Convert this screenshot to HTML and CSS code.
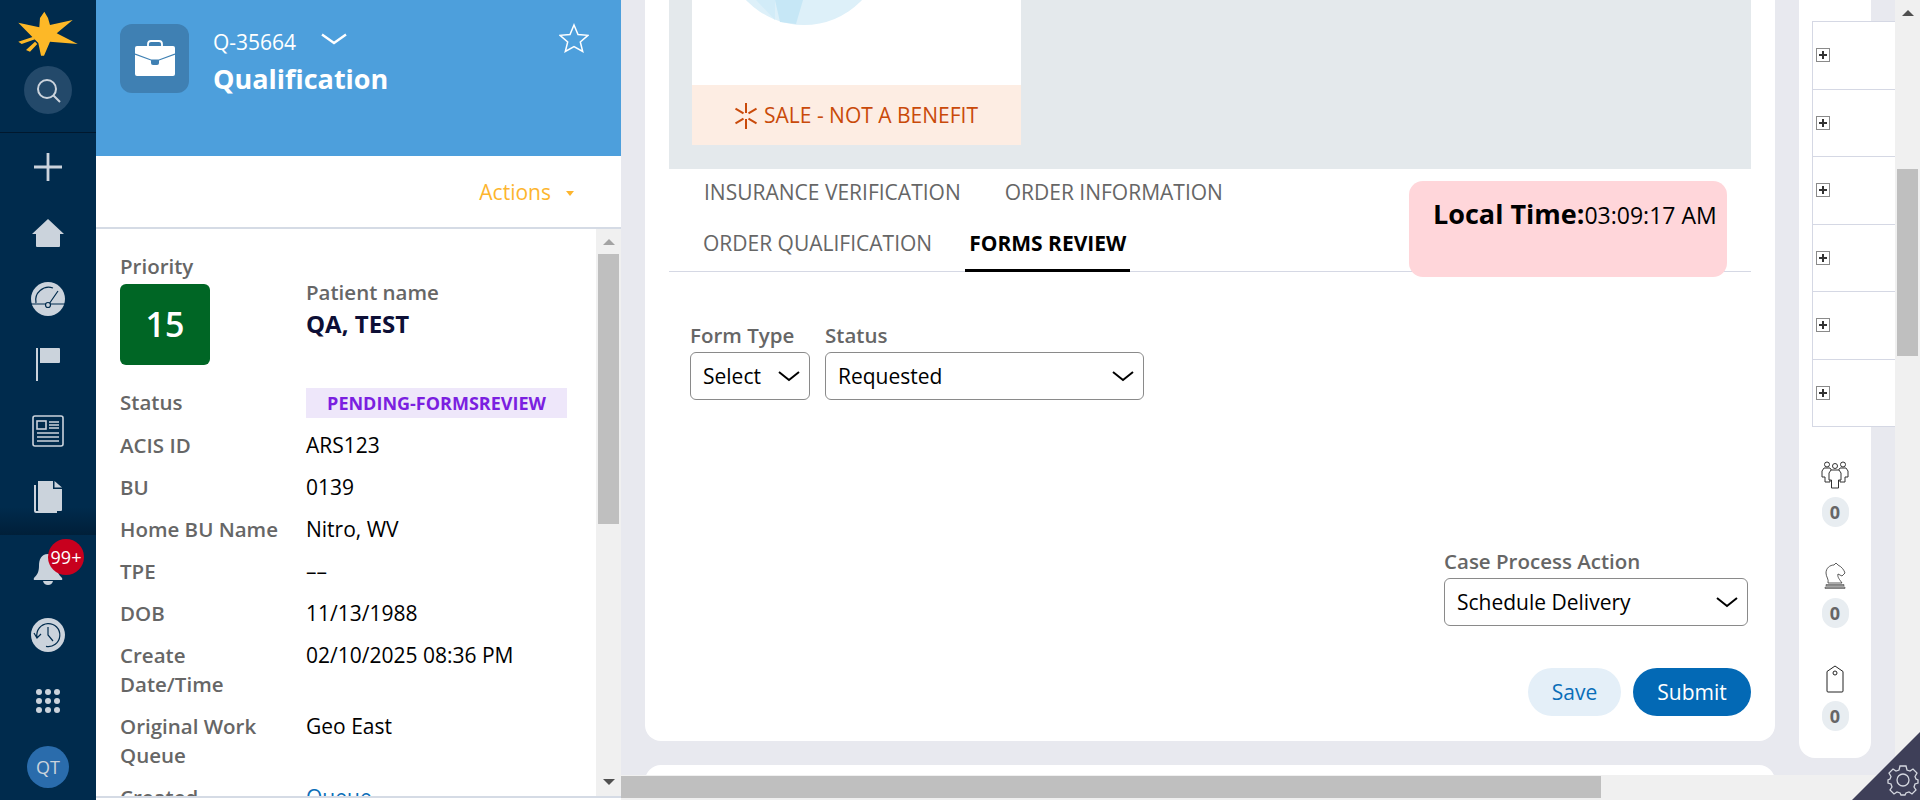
FILE: index.html
```html
<!DOCTYPE html>
<html lang="en">
<head>
  <meta charset="UTF-8" />
  <title>Qualification Q-35664</title>
  <link rel="stylesheet" href="styles.css">
</head>
<body>
  <div class="app">

    <nav class="nav">
      <div class="nav-top">
        <svg class="logo" width="64" height="48" viewBox="0 0 64 48">
          <path fill="#FDB827" d="M28.300 1.700 L32 8 L34 15 L56.700 10 L40.700 23.300 L61.700 34 L34 31.700 L28 45.700 L25 45.700 L22.300 33 L2.300 12.700 L23.300 17.300 L24 8 Z"/>
          <path fill="#FDB827" d="M2.300 31.700 L17.300 26.700 L19 29.300 L5.700 34 Z M10 40 L19 31.700 L21.300 34 L14 41.700 Z"/>
        </svg>
        <div class="search-btn">
          <svg width="28" height="28" viewBox="0 0 28 28" fill="none" stroke="#CBD3DC" stroke-width="2">
            <circle cx="13" cy="13" r="9"/><path d="M19.500 19.500 L26 26"/>
          </svg>
        </div>
      </div>
      <div class="nav-list">
        <div class="nav-item">
          <svg width="28" height="28" viewBox="0 0 28 28" fill="#CBD3DC"><path d="M12.600 0h2.800v12.600H28v2.800H15.400V28h-2.800V15.400H0v-2.800h12.600z"/></svg>
        </div>
        <div class="nav-item">
          <svg width="34" height="30" viewBox="0 0 34 30" fill="#CBD3DC"><path d="M17 1 L33 16 L29 16 L29 28 Q29 29 28 29 L6 29 Q5 29 5 28 L5 16 L1 16 Z"/></svg>
        </div>
        <div class="nav-item">
          <svg width="34" height="34" viewBox="0 0 34 34">
            <circle cx="17" cy="17" r="17" fill="#CBD3DC"/>
            <path d="M5 21 A13 13 0 0 1 22 6 M0 22 H34 M18 22 L27 9" fill="none" stroke="#002B4D" stroke-width="1.200"/>
            <circle cx="17" cy="23" r="2.500" fill="#CBD3DC" stroke="#002B4D" stroke-width="1.200"/>
          </svg>
        </div>
        <div class="nav-item">
          <svg width="26" height="34" viewBox="0 0 26 34" fill="#CBD3DC"><path d="M1 0h2v33H1z"/><path d="M5 0h19q1 0 1 1v13q0 1-1 1H5z"/></svg>
        </div>
        <div class="nav-item">
          <svg width="32" height="32" viewBox="0 0 32 32" fill="none" stroke="#CBD3DC" stroke-width="1.600">
            <rect x="1" y="1" width="30" height="30" rx="2"/><rect x="5" y="6" width="9" height="8"/>
            <path d="M17 7h10M17 10h10M17 13h10M5 18h22M5 22h22M5 26h22"/>
          </svg>
        </div>
        <div class="nav-item">
          <svg width="30" height="34" viewBox="0 0 30 34" fill="#CBD3DC"><path d="M3 5v26h21v2H3q-2 0-2-2V5z"/><path d="M5 1h15v8h9v21q0 1-1 1H6q-1 0-1-1z"/><path d="M21.500 1 L29 7.500 H21.500z"/></svg>
        </div>
      </div>
      <div class="nav-bottom">
        <div class="nav-item">
          <svg width="30" height="32" viewBox="0 0 30 32" fill="#CBD3DC"><path d="M15 1 C8 1 6 7 6 13 C6 19 4 22 1 25 Q0 27 2 27 H28 Q30 27 29 25 C26 22 24 19 24 13 C24 7 22 1 15 1z"/><path d="M10 28h10q-1 4-5 4t-5-4z"/></svg>
          <span class="badge">99+</span>
        </div>
        <div class="nav-item">
          <svg width="34" height="34" viewBox="0 0 34 34">
            <circle cx="17" cy="17" r="17" fill="#CBD3DC"/>
            <path d="M6 19 A11.500 11.500 0 1 1 15 28.300 M3 15 L6 20 L10 16 M17 9 V17 L22 23" fill="none" stroke="#002B4D" stroke-width="1.200"/>
          </svg>
        </div>
        <div class="nav-item">
          <div class="dots"><i></i><i></i><i></i><i></i><i></i><i></i><i></i><i></i><i></i></div>
        </div>
        <div class="nav-item"><span class="avatar">QT</span></div>
      </div>
    </nav>

    <aside class="case-panel">
      <header class="case-head">
        <div class="case-icon">
          <svg width="40" height="37" viewBox="0 0 40 37">
            <path d="M13 7V4q0-3 3-3h8q3 0 3 3v3" fill="none" stroke="#fff" stroke-width="1.800"/>
            <rect y="6" width="40" height="30" rx="2" fill="#fff"/>
            <path d="M0 14 L16 20 H24 L40 14" fill="none" stroke="#3F80B3" stroke-width="1.200"/>
            <path d="M16 20h8v3q0 2-2 2h-4q-2 0-2-2z" fill="#3F80B3"/>
          </svg>
        </div>
        <div class="case-title">
          <div class="case-id">
            Q-35664
            <svg class="case-chev" width="26" height="12" viewBox="0 0 26 12" fill="none" stroke="#fff" stroke-width="2.400"><path d="M1 1.500 L13 10 L25 1.500"/></svg>
          </div>
          <h1>Qualification</h1>
        </div>
        <svg class="star" width="30" height="30" viewBox="0 0 30 30" fill="none" stroke="#fff" stroke-width="1.500"><path d="M15 2 L19 11.500 L29 12.300 L21.300 19 L23.700 28.500 L15 23.500 L6.300 28.500 L8.700 19 L1 12.300 L11 11.500 Z"/></svg>
      </header>
      <div class="actions-bar">
        <span>Actions</span><i class="caret"></i>
      </div>
      <div class="case-body">
        <div class="case-info">
          <div class="summary">
            <div class="priority">
              <div class="label">Priority</div>
              <div class="priority-box">15</div>
            </div>
            <div class="patient">
              <div class="label">Patient name</div>
              <div class="patient-name">QA, TEST</div>
            </div>
          </div>
          <div class="info-row status-row"><div class="label">Status</div><div class="chip">PENDING-FORMSREVIEW</div></div>
          <div class="info-row"><div class="label">ACIS ID</div><div>ARS123</div></div>
          <div class="info-row"><div class="label">BU</div><div>0139</div></div>
          <div class="info-row"><div class="label">Home BU Name</div><div>Nitro, WV</div></div>
          <div class="info-row"><div class="label">TPE</div><div>––</div></div>
          <div class="info-row"><div class="label">DOB</div><div>11/13/1988</div></div>
          <div class="info-row"><div class="label">Create<br>Date/Time</div><div>02/10/2025 08:36 PM</div></div>
          <div class="info-row"><div class="label">Original Work<br>Queue</div><div>Geo East</div></div>
          <div class="info-row"><div class="label">Created</div><div class="link">Queue</div></div>
        </div>
        <div class="vscroll panel-scroll">
          <i class="arrow-up"></i>
          <div class="thumb"></div>
          <i class="arrow-down"></i>
        </div>
      </div>
    </aside>

    <div class="workspace">
      <div class="work-area">
        <main class="main-col">
          <section class="card">
            <div class="banner">
              <div class="benefit">
                <div class="benefit-img">
                  <svg width="329" height="85" viewBox="0 0 329 85">
                    <circle cx="112" cy="-55" r="80" fill="#DDF0F9"/>
                    <path d="M83 0 L88 22 L104 24 L111 0 Z" fill="#C6E7F6"/>
                    <path d="M64 0 L83 20 L83 0 Z" fill="#D2ECF8"/>
                  </svg>
                </div>
                <div class="benefit-tag">
                  <svg width="22" height="26" viewBox="0 0 22 26" fill="#C94A0A"><path d="M10 0h2v10h-2zM10 16h2v10h-2zM0 6.500l1-1.700 8 4.700-1 1.700zM13 16.500l1-1.700 8 4.700-1 1.700zM0 19.500l8-4.700 1 1.700-8 4.700zM13 9.500l8-4.700 1 1.700-8 4.700z"/></svg>
                  SALE - NOT A BENEFIT
                </div>
              </div>
            </div>

            <div class="tabs">
              <div class="tab-row first">
                <span class="tab">INSURANCE VERIFICATION</span>
                <span class="tab">ORDER INFORMATION</span>
              </div>
              <div class="tab-row second">
                <span class="tab">ORDER QUALIFICATION</span>
                <span class="tab active">FORMS REVIEW</span>
              </div>
              <div class="local-time"><b>Local Time:</b>03:09:17 AM</div>
            </div>

            <div class="filters">
              <div class="field">
                <label class="label">Form Type</label>
                <div class="select small">Select
                  <svg class="chev" width="22" height="11" viewBox="0 0 22 11" fill="none" stroke="#000" stroke-width="2"><path d="M1 1 L11 9 L21 1"/></svg>
                </div>
              </div>
              <div class="field">
                <label class="label">Status</label>
                <div class="select status">Requested
                  <svg class="chev" width="22" height="11" viewBox="0 0 22 11" fill="none" stroke="#000" stroke-width="2"><path d="M1 1 L11 9 L21 1"/></svg>
                </div>
              </div>
            </div>

            <div class="process">
              <div class="field">
                <label class="label">Case Process Action</label>
                <div class="select action">Schedule Delivery
                  <svg class="chev" width="22" height="11" viewBox="0 0 22 11" fill="none" stroke="#000" stroke-width="2"><path d="M1 1 L11 9 L21 1"/></svg>
                </div>
              </div>
            </div>

            <div class="buttons">
              <button class="btn-save">Save</button>
              <button class="btn-submit">Submit</button>
            </div>
          </section>
          <section class="card next"></section>
        </main>

        <div class="side-col">
          <div class="side-card">
            <div class="expand-list">
              <div class="expand-row"><span class="plus"></span></div>
              <div class="expand-row"><span class="plus"></span></div>
              <div class="expand-row"><span class="plus"></span></div>
              <div class="expand-row"><span class="plus"></span></div>
              <div class="expand-row"><span class="plus"></span></div>
              <div class="expand-row"><span class="plus"></span></div>
            </div>
            <div class="counter people">
              <svg width="28" height="28" viewBox="0 0 28 28" fill="#fff" stroke="#333" stroke-width="1">
                <circle cx="6" cy="3.500" r="2.500"/><circle cx="14" cy="5" r="2.500"/><circle cx="22" cy="3.500" r="2.500"/>
                <path d="M3 7h6l2 3v8H9v3H4v-5H1v-6z"/><path d="M25 7h-6l-2 3v8h2v3h5v-5h3v-6z"/>
                <path d="M10 9h8l2 3v7h-2.500v8h-7v-8H8v-7z"/>
              </svg>
              <span class="count">0</span>
            </div>
            <div class="counter">
              <svg class="knight" width="22" height="28" viewBox="0 0 22 28" fill="#fff" stroke="#333" stroke-width="0.800">
                <path d="M4 21 C5 17 2 15 2 11 C2 6 6 3 10 3 L12 1 L14 3 C18 5 20 8 21 11 L18 14 L14 12 C13 15 16 18 18 21 Z"/>
                <path d="M2 22.500h18v1.500H2z" fill="#aaa" stroke-width="0.500"/><path d="M1 25h20v1.500H1z" fill="#aaa" stroke-width="0.500"/>
              </svg>
              <span class="count">0</span>
            </div>
            <div class="counter">
              <svg width="18" height="28" viewBox="0 0 18 28" fill="#fff" stroke="#222" stroke-width="1">
                <path d="M9 1 L17 6.500 V26 Q17 27 16 27 H2 Q1 27 1 26 V6.500 Z"/><circle cx="9" cy="8" r="2"/>
              </svg>
              <span class="count">0</span>
            </div>
          </div>
        </div>

        <div class="vscroll page-scroll">
          <i class="arrow-up"></i>
          <div class="thumb"></div>
        </div>
      </div>

      <div class="hscroll"><div class="hthumb"></div></div>
    </div>
  </div>

  <div class="corner">
    <svg width="68" height="68" viewBox="0 0 68 68">
      <path d="M68 0 V68 H0 Z" fill="#3E3F58"/>
      <g transform="translate(51 48)" fill="none" stroke="#D5D8E0" stroke-width="1.300">
        <circle r="6"/>
        <path d="M-3-14 L3-14 L4-10 L7-9 L10-11 L14-7 L12-3.500 L13-1 L15 0 L15 3 L12 4 L11 7 L13 10 L9 14 L6 12 L3 13 L2 15 L-2 15 L-3 13 L-6 12 L-9 14 L-13 10 L-11 7 L-12 4 L-15 3 L-15 0 L-13-1 L-12-3.500 L-14-7 L-10-11 L-7-9 L-4-10 Z"/>
      </g>
    </svg>
  </div>
</body>
</html>
```

FILE: styles.css
```css
* {
  margin: 0;
  padding: 0;
  box-sizing: border-box;
}

body {
  font-family: 'Open Sans', 'Noto Sans', sans-serif;
  font-size: 21px;
  line-height: 29px;
  color: #000;
  overflow: hidden;
}

.app {
  display: flex;
  height: 800px;
  overflow: hidden;
}

/* left nav */
.nav {
  width: 96px;
  flex-shrink: 0;
  background: #002B4D;
  display: flex;
  flex-direction: column;
}

.nav-top {
  height: 133px;
  border-bottom: 1px solid #00182e;
  display: flex;
  flex-direction: column;
  align-items: center;
  padding-top: 10px;
}

.search-btn {
  width: 48px;
  height: 48px;
  margin-top: 8px;
  border-radius: 50%;
  background: #23496A;
  display: flex;
  align-items: center;
  justify-content: center;
}

.nav-list {
  height: 402px;
  padding-top: 1px;
  background: linear-gradient(to bottom, #002B4D 93%, #001f39);
}

.nav-item {
  position: relative;
  height: 66px;
  display: flex;
  align-items: center;
  justify-content: center;
}

.nav-bottom {
  padding-top: 1px;
}

.badge {
  position: absolute;
  left: 48px;
  top: 3px;
  width: 36px;
  height: 36px;
  border-radius: 50%;
  background: #C8001E;
  color: #fff;
  font-size: 18px;
  line-height: 36px;
  text-align: center;
}

.dots {
  display: grid;
  grid-template-columns: repeat(3, 6px);
  gap: 3px;
}

.dots i {
  width: 6px;
  height: 6px;
  border-radius: 50%;
  background: #CBD3DC;
}

.avatar {
  width: 42px;
  height: 42px;
  border-radius: 50%;
  background: #2A6CAC;
  color: #CBD3DC;
  font-size: 18px;
  line-height: 42px;
  text-align: center;
}

/* case panel */
.case-panel {
  width: 525px;
  flex-shrink: 0;
  background: #fff;
  display: flex;
  flex-direction: column;
  height: 800px;
}

.case-head {
  height: 156px;
  background: #4D9FDC;
  color: #fff;
  display: flex;
  padding: 24px 24px 0;
}

.case-icon {
  width: 69px;
  height: 69px;
  border-radius: 12px;
  background: #3F80B3;
  display: flex;
  align-items: center;
  justify-content: center;
}

.case-title {
  margin-left: 24px;
  flex: 1;
}

.case-id {
  margin-top: 4px;
  display: flex;
  align-items: center;
}

.case-chev {
  margin: -8px 0 0 25px;
}

h1 {
  font-size: 27px;
  font-weight: 700;
  line-height: 36px;
  margin-top: 4px;
}

.star {
  margin-top: -1px;
  margin-right: 8px;
}

.actions-bar {
  height: 73px;
  padding: 2px 47px 0 0;
  border-bottom: 2px solid #D5DBE5;
  color: #FDB52E;
  display: flex;
  align-items: center;
  justify-content: flex-end;
}

.caret {
  width: 0;
  height: 0;
  margin-left: 15px;
  margin-top: 2px;
  border-left: 4px solid transparent;
  border-right: 4px solid transparent;
  border-top: 5px solid #FDB52E;
}

.case-body {
  height: 569px;
  border-bottom: 2px solid #D5DBE5;
  display: flex;
  overflow: hidden;
}

.case-info {
  flex: 1;
  padding: 23px 0 0 24px;
}

.label {
  color: #666;
  font-weight: 600;
  font-size: 20.500px;
  line-height: 29px;
}

.summary {
  display: flex;
  height: 136px;
}

.priority {
  width: 186px;
}

.priority-box {
  width: 90px;
  height: 81px;
  margin-top: 3px;
  border-radius: 6px;
  background: #006625;
  color: #fff;
  font-size: 34px;
  font-weight: 600;
  line-height: 81px;
  text-align: center;
}

.patient {
  padding-top: 26px;
}

.patient-name {
  font-size: 24px;
  font-weight: 700;
  line-height: 33px;
  color: #0D0F36;
}

.info-row {
  display: flex;
  margin-bottom: 13px;
}

.info-row .label {
  width: 186px;
  flex-shrink: 0;
}

.chip {
  width: 261px;
  height: 30px;
  background: #EEE7FA;
  color: #7B1FE0;
  font-size: 18px;
  font-weight: 700;
  line-height: 30px;
  text-align: center;
}

.status-row {
  height: 29px;
  margin-bottom: 14px;
}

.link {
  color: #0A6EB8;
}

/* scrollbars */
.vscroll {
  width: 25px;
  flex-shrink: 0;
  background: #F0F0F0;
  display: flex;
  flex-direction: column;
  align-items: center;
}

.arrow-up {
  width: 0;
  height: 0;
  margin-top: 10px;
  border-left: 6px solid transparent;
  border-right: 6px solid transparent;
  border-bottom: 6px solid #A3A3A3;
}

.arrow-down {
  width: 0;
  height: 0;
  margin-top: 255px;
  border-left: 6px solid transparent;
  border-right: 6px solid transparent;
  border-top: 6px solid #505050;
}

.thumb {
  width: 21px;
  background: #BFBFBF;
}

.panel-scroll .thumb {
  height: 270px;
  margin-top: 9px;
}

.page-scroll {
  height: 775px;
}

.page-scroll .arrow-up {
  border-bottom-color: #505050;
}

.page-scroll .thumb {
  height: 187px;
  margin-top: 153px;
}

.hscroll {
  height: 25px;
  background: #F0F0F0;
  padding: 1px 0 2px;
}

.hthumb {
  width: 980px;
  height: 22px;
  background: #BFBFBF;
}

/* main work area */
.workspace {
  flex: 1;
  display: flex;
  flex-direction: column;
  background: #E8E9EF;
}

.work-area {
  height: 775px;
  display: flex;
  overflow: hidden;
}

.main-col {
  width: 1130px;
  margin-left: 24px;
  flex-shrink: 0;
}

.card {
  background: #fff;
  height: 741px;
  padding: 0 24px;
  border-radius: 0 0 16px 16px;
}

.card.next {
  height: 60px;
  margin-top: 24px;
  border-radius: 16px 16px 0 0;
}

.banner {
  height: 169px;
  background: #E4E9EC;
  padding-left: 23px;
}

.benefit {
  width: 329px;
  height: 145px;
  background: #fff;
}

.benefit-img {
  height: 85px;
}

.benefit-img svg {
  display: block;
}

.benefit-tag {
  height: 60px;
  padding-top: 1px;
  background: #FDEDE3;
  color: #C94A0A;
  display: flex;
  align-items: center;
  justify-content: center;
  gap: 7px;
}

.tabs {
  position: relative;
  height: 103px;
  border-bottom: 1px solid #D5D8E4;
}

.tab-row {
  display: flex;
}

.tab-row.first {
  height: 49px;
  padding: 9px 0 0 35px;
  gap: 44px;
}

.tab-row.second {
  height: 54px;
  padding: 11px 0 0 34px;
  gap: 37px;
}

.tab {
  color: #666;
  height: 43px;
}

.tab.active {
  color: #000;
  font-weight: 700;
  padding: 0 4px;
  margin-left: -4px;
  border-bottom: 3px solid #000;
}

.local-time {
  position: absolute;
  left: 740px;
  top: 12px;
  width: 318px;
  height: 96px;
  padding: 15px 0 0 24px;
  background: #FFD6DA;
  border-radius: 14px;
  font-size: 23px;
  line-height: 36px;
}

.local-time b {
  font-size: 27px;
}

.filters {
  display: flex;
  gap: 15px;
  padding: 49px 0 0 21px;
}

.select {
  height: 48px;
  margin-top: 2px;
  border: 1px solid #8A8A8A;
  border-radius: 6px;
  background: #fff;
  display: flex;
  align-items: center;
  justify-content: space-between;
  padding: 0 9px 0 12px;
}

.select.small {
  width: 120px;
}

.select.status {
  width: 319px;
}

.select.action {
  width: 304px;
}

.process {
  display: flex;
  justify-content: flex-end;
  padding: 147px 3px 0 0;
}

.buttons {
  display: flex;
  justify-content: flex-end;
  gap: 12px;
  margin-top: 42px;
}

button {
  height: 48px;
  border: none;
  border-radius: 24px;
  font-family: inherit;
  font-size: 21px;
}

.btn-save {
  width: 93px;
  background: #E4EFF8;
  color: #0A6EB8;
}

.btn-submit {
  width: 118px;
  background: #0369B5;
  color: #fff;
  font-weight: 500;
}

/* side rail */
.side-col {
  width: 96px;
  margin-left: 24px;
  flex-shrink: 0;
}

.side-card {
  width: 72px;
  height: 758px;
  background: #fff;
  border-radius: 0 0 16px 16px;
  padding-top: 21px;
}

.expand-list {
  width: 83px;
  height: 406px;
  margin-left: 13px;
  background: #fff;
  border: 1px solid #D5D8E4;
  border-right: none;
  display: flex;
  flex-direction: column;
}

.expand-row {
  flex: 1;
  padding-left: 3px;
  display: flex;
  align-items: center;
  border-bottom: 1px solid #D5D8E4;
}

.expand-row:last-child {
  border-bottom: none;
}

.plus {
  width: 14px;
  height: 14px;
  border: 1px solid #8A8A8A;
  background: linear-gradient(#333, #333) center / 8px 2px no-repeat, linear-gradient(#333, #333) center / 2px 8px no-repeat, #fff;
}

.counter {
  display: flex;
  flex-direction: column;
  align-items: center;
  height: 102px;
  gap: 8px;
}

.counter.people {
  margin-top: 34px;
}

.knight {
  margin-top: -1px;
}

.count {
  width: 27px;
  height: 30px;
  border-radius: 14px;
  background: #E8EDF1;
  color: #666;
  font-size: 18px;
  font-weight: 700;
  line-height: 30px;
  text-align: center;
}

/* settings corner */
.corner {
  position: absolute;
  right: 0;
  bottom: 0;
  width: 68px;
  height: 68px;
}

.corner svg {
  display: block;
}
```
